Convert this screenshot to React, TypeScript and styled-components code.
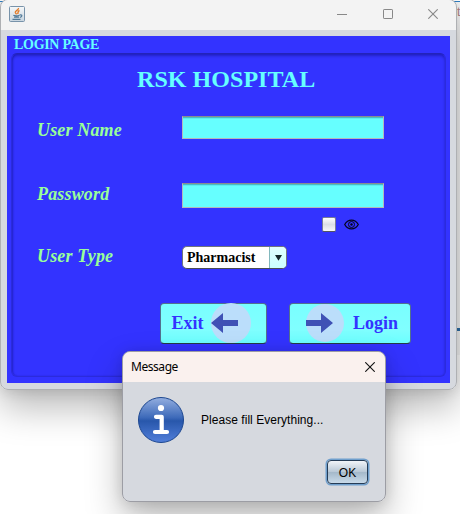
import React from "react";
import styled, { createGlobalStyle } from "styled-components";

const GlobalStyle = createGlobalStyle`
  * { box-sizing: border-box; }
  body { margin: 0; background: #fff; overflow: hidden; }
`;

const serif = `"Liberation Serif", "Times New Roman", serif`;

const Desktop = styled.main`
  position: relative;
  width: 460px;
  height: 514px;
  overflow: hidden;
  background: #fff;
`;

const Backdrop = styled.div`
  display: flex;
  justify-content: space-between;
  height: 355px;
  border-top: 1px solid #fff;
`;

const LeftEdge = styled.div`
  width: 8px;
  border-top: 1px solid #2f7fc4;
  background: repeating-linear-gradient(180deg, #f4f4f4 0 16px, #d9bd84 16px 17px, #f4f4f4 17px 18px);
`;

const RightEdge = styled.div`
  width: 14px;
  padding: 3px 0 0 11px;
  border-top: 1px solid #2f7fc4;
  background: linear-gradient(#2f6fa8, #2f6fa8) 0 326px / 100% 3px no-repeat, #f6f6f6;
  font: 12px/14px "Liberation Sans", sans-serif;
  color: #b08080;
`;

const AppWindow = styled.section`
  position: absolute;
  left: 0;
  top: -1px;
  width: 457px;
  height: 391px;
  display: flex;
  flex-direction: column;
  border: 1px solid #aeb0b3;
  border-radius: 8px;
  background: #d6d9df;
  overflow: hidden;
`;

const WindowShadow = styled.div<{ $x: number; $y: number; $w: number; $h: number }>`
  position: absolute;
  left: ${(p) => p.$x}px;
  top: ${(p) => p.$y}px;
  width: ${(p) => p.$w}px;
  height: ${(p) => p.$h}px;
  border-radius: 8px;
  box-shadow: 0 18px 36px rgba(0, 0, 0, 0.27), 0 1px 14px rgba(0, 0, 0, 0.13);
`;

const TitleBar = styled.header`
  flex: none;
  display: flex;
  align-items: center;
  justify-content: space-between;
  height: 30px;
  padding: 0 18px 2px 8px;
  background: #f3f3f3;
`;

const WindowControls = styled.div`
  display: flex;
  align-items: center;
  gap: 35.5px;
`;

const Panel = styled.div`
  flex: none;
  display: flex;
  flex-direction: column;
  width: 443px;
  height: 347px;
  margin: 6px 0 0 6px;
  padding: 0 4px 6px;
  background: #3333ff;
`;

const PanelCaption = styled.div`
  height: 17px;
  padding-left: 3px;
  font: bold 14px/17px ${serif};
  letter-spacing: -0.3px;
  color: #66ffff;
`;

const GroupBox = styled.div`
  flex: 1;
  padding-top: 12px;
  border: 1px solid #2b2bdd;
  border-top-color: #2323ba;
  border-radius: 6px;
  box-shadow: inset 0 2px 3px rgba(0, 0, 80, 0.32), inset 1px 0 2px rgba(0, 0, 80, 0.2);
`;

const Heading = styled.h1`
  margin: 0 0 23px 125px;
  height: 27px;
  font: bold 24px/27px ${serif};
  letter-spacing: 0.05px;
  color: #66ffff;
  white-space: nowrap;
`;

const FormRow = styled.div<{ $height: number; $gap: number }>`
  display: grid;
  grid-template-columns: 145px 1fr;
  grid-template-rows: ${(p) => p.$height}px;
  align-items: center;
  height: ${(p) => p.$height}px;
  margin: 0 61px ${(p) => p.$gap}px 25px;
`;

const FieldLabel = styled.label<{ $drop?: number; $lift?: number }>`
  margin: ${(p) => p.$drop ?? 0}px 0 ${(p) => p.$lift ?? 0}px;
  font: italic bold 18px/19px ${serif};
  letter-spacing: 0.16px;
  color: #99ff99;
  white-space: nowrap;
`;

const TextField = styled.input`
  width: 202px;
  height: 100%;
  padding: 0 4px;
  border: 1px solid #b3b8bb;
  border-top-color: #878e91;
  border-radius: 0;
  outline: 0;
  background: #66ffff;
  box-shadow: inset 0 1px #48bcc4, inset 0 2px #5ceef0;
`;

const RevealRow = styled.div`
  display: flex;
  align-items: center;
  gap: 8px;
  height: 15px;
  margin: 0 0 14px 310px;
`;

const CheckBox = styled.span`
  width: 14px;
  height: 15px;
  border: 1px solid #7b7e95;
  border-bottom-color: #54565f;
  border-radius: 2px;
  background: linear-gradient(#fff, #dddfe6 50%, #f8f8fa);
`;

const Combo = styled.div`
  display: flex;
  width: 105px;
  height: 23px;
  border: 1px solid #70747d;
  border-bottom-color: #4b4e55;
  border-radius: 5px;
  background: #fff;
  overflow: hidden;
`;

const ComboValue = styled.span`
  flex: 1;
  padding-left: 4px;
  font: bold 14px/21px ${serif};
  color: #000;
`;

const ComboArrow = styled.span`
  display: grid;
  place-items: center;
  width: 17px;
  border-left: 1px solid #82b8bd;
  background: linear-gradient(#e2ffff, #caffff);
`;

const Actions = styled.div`
  display: flex;
  gap: 22px;
  margin: 34px 0 0 148px;
`;

const ActionButton = styled.button<{ $width: number; $inset: number; $gap: number }>`
  display: flex;
  align-items: center;
  gap: ${(p) => p.$gap}px;
  width: ${(p) => p.$width}px;
  height: 41px;
  padding: 0 0 1px ${(p) => p.$inset}px;
  border: 1px solid #52718f;
  border-bottom-color: #263c48;
  border-radius: 4px;
  background: linear-gradient(#79ffff, #80ffff 65%, #6cffff);
  font: bold 18px/22px ${serif};
  color: #3333ff;
`;

const ButtonIcon = styled.svg`
  flex: none;
  display: block;
`;

const Dialog = styled.section`
  position: absolute;
  left: 122px;
  top: 351px;
  width: 264px;
  height: 151px;
  display: flex;
  flex-direction: column;
  border: 1px solid #9c9da4;
  border-radius: 8px;
  background: #d6d9df;
  overflow: hidden;
`;

const DialogTitle = styled.header`
  display: flex;
  align-items: center;
  justify-content: space-between;
  height: 30px;
  padding: 0 10px 1px 8px;
  background: #faf1ee;
  font: 12px/16px "Noto Sans", "Open Sans", sans-serif;
  letter-spacing: -0.45px;
  color: #000;
`;

const DialogMessage = styled.div`
  display: flex;
  align-items: center;
  gap: 16px;
  margin: 14px 0 0 14px;
  font: 12px/16px "Liberation Sans", Arial, sans-serif;
  letter-spacing: 0.04px;
  color: #000;
`;

const OkButton = styled.button`
  align-self: flex-end;
  width: 41px;
  height: 24px;
  margin: 16px 17px 0 0;
  padding: 2px 0 0;
  border: 1px solid #253c56;
  border-radius: 4px;
  background: linear-gradient(#f1f4f8, #bac9d7 48%, #a5b9ca 52%, #c8dae9);
  box-shadow: 0 0 0 1.5px #6f9fcd;
  font: 12px/20px "Liberation Sans", Arial, sans-serif;
  color: #000;
`;

const JavaIcon = () => (
  <svg width="16" height="16" viewBox="0 0 16 16">
    <defs>
      <linearGradient id="tile" x2="0" y2="1">
        <stop stopColor="#f6f8f9" />
        <stop offset="1" stopColor="#c7d4df" />
      </linearGradient>
    </defs>
    <rect x=".5" y=".5" width="15" height="15" rx="1" fill="url(#tile)" stroke="#7893aa" />
    <path d="M9.5 2C10 4 6 4.600 6.300 6.400C6.500 7.300 7.500 7.800 7.700 8.400M10.500 4.500C8 5.500 9.600 6.500 8.700 8" fill="none" stroke="#e37b26" strokeWidth="1.400" />
    <path d="M4.300 9.200C5 10 9 10 10.500 9.200M5 11.100H10M3.500 13.300H11.500M10.700 8.900C14 8.500 13 11 10.800 11.300" fill="none" stroke="#517a98" strokeWidth="1.200" />
  </svg>
);

const EyeIcon = () => (
  <svg width="15" height="11" viewBox="0 0 15 11">
    <path d="M.7 5.500C3.800-.4 11.200-.4 14.300 5.500C11.200 11.400 3.800 11.400.7 5.500Z" fill="none" stroke="#05051c" strokeWidth="1.200" />
    <circle cx="7.500" cy="5.500" r="3" fill="none" stroke="#05051c" strokeWidth="1" />
    <circle cx="7.500" cy="5.500" r="1.200" fill="#05051c" />
  </svg>
);

const InfoIcon = () => (
  <svg width="48" height="48" viewBox="0 0 48 48">
    <defs>
      <linearGradient id="info" x2="0" y2="1">
        <stop stopColor="#94afe0" />
        <stop offset=".45" stopColor="#3c69b9" />
        <stop offset=".52" stopColor="#2857ab" />
        <stop offset="1" stopColor="#527fda" />
      </linearGradient>
    </defs>
    <circle cx="24" cy="24" r="22.500" fill="url(#info)" stroke="#1d4790" />
    <circle cx="24" cy="12" r="3.100" fill="#fff" />
    <path d="M19 20.800H24.700V35.700M18 36H30" fill="none" stroke="#fff" strokeWidth="4.200" strokeLinecap="round" strokeLinejoin="round" />
  </svg>
);

const CloseIcon = ({ color }: { color: string }) => (
  <svg width="10" height="10" viewBox="0 0 10 10">
    <path d="M.3.3 9.700 9.700M9.700.3.3 9.700" fill="none" stroke={color} strokeWidth="1.100" />
  </svg>
);

export default function App() {
  return (
    <Desktop>
      <GlobalStyle />
      <Backdrop>
        <LeftEdge />
        <RightEdge>t</RightEdge>
      </Backdrop>
      <WindowShadow $x={0} $y={0} $w={457} $h={390} />
      <AppWindow>
        <TitleBar>
          <JavaIcon />
          <WindowControls>
            <svg width="10" height="10" viewBox="0 0 10 10">
              <path d="M0 5.500H10" stroke="#888" />
            </svg>
            <svg width="10" height="10" viewBox="0 0 10 10">
              <rect x=".5" y=".5" width="9" height="9" rx=".6" fill="none" stroke="#888" />
            </svg>
            <CloseIcon color="#888" />
          </WindowControls>
        </TitleBar>
        <Panel>
          <PanelCaption>LOGIN PAGE</PanelCaption>
          <GroupBox>
            <Heading>RSK HOSPITAL</Heading>
            <FormRow $height={23} $gap={44}>
              <FieldLabel htmlFor="user" $drop={5}>User Name</FieldLabel>
              <TextField id="user" />
            </FormRow>
            <FormRow $height={25} $gap={9}>
              <FieldLabel htmlFor="password" $lift={2}>Password</FieldLabel>
              <TextField id="password" type="password" />
            </FormRow>
            <RevealRow>
              <CheckBox />
              <EyeIcon />
            </RevealRow>
            <FormRow $height={23} $gap={0}>
              <FieldLabel $lift={2}>User Type</FieldLabel>
              <Combo>
                <ComboValue>Pharmacist</ComboValue>
                <ComboArrow>
                  <svg width="7" height="6" viewBox="0 0 7 6">
                    <path d="M0 0H7L3.500 5.800Z" fill="#17292b" />
                  </svg>
                </ComboArrow>
              </Combo>
            </FormRow>
            <Actions>
              <ActionButton $width={107} $inset={10.5} $gap={7.5}>
                Exit
                <ButtonIcon width="40" height="40" viewBox="0 0 40 40">
                  <circle cx="20" cy="20" r="20" fill="#bbdefb" />
                  <path d="M0 20 12 10V17H27V23H12V30Z" fill="#3f51b5" />
                </ButtonIcon>
              </ActionButton>
              <ActionButton $width={122} $inset={16} $gap={9}>
                <ButtonIcon width="38" height="38" viewBox="0 0 38 38">
                  <circle cx="19" cy="19" r="19" fill="#bbdefb" />
                  <path d="M0 16H15V9L27 19 15 29V22H0Z" fill="#3f51b5" />
                </ButtonIcon>
                Login
              </ActionButton>
            </Actions>
          </GroupBox>
        </Panel>
      </AppWindow>
      <WindowShadow $x={122} $y={351} $w={264} $h={151} />
      <Dialog>
        <DialogTitle>
          Message
          <CloseIcon color="#111" />
        </DialogTitle>
        <DialogMessage>
          <InfoIcon />
          Please fill Everything...
        </DialogMessage>
        <OkButton>OK</OkButton>
      </Dialog>
    </Desktop>
  );
}
